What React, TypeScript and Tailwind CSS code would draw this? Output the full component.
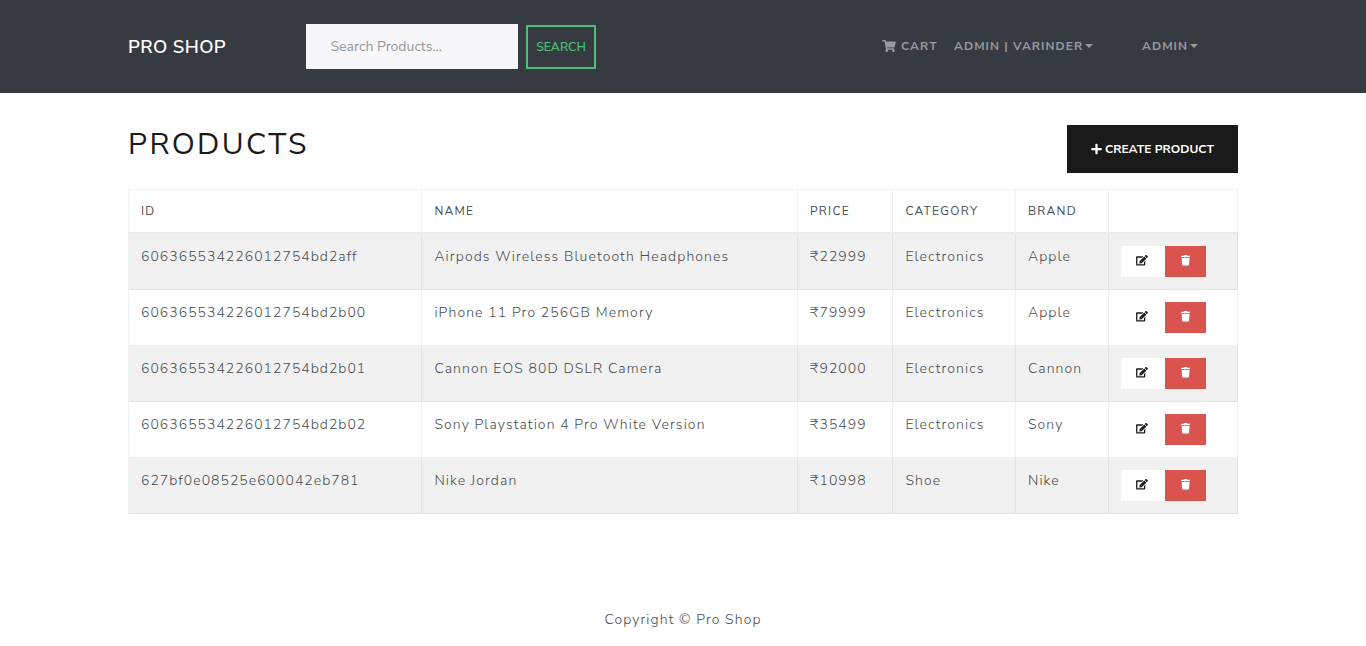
import React from "react";
import { FaEdit, FaPlus, FaShoppingCart, FaTrash } from "react-icons/fa";

const products = [
  { id: "606365534226012754bd2aff", name: "Airpods Wireless Bluetooth Headphones", price: 22999, category: "Electronics", brand: "Apple" },
  { id: "606365534226012754bd2b00", name: "iPhone 11 Pro 256GB Memory", price: 79999, category: "Electronics", brand: "Apple" },
  { id: "606365534226012754bd2b01", name: "Cannon EOS 80D DSLR Camera", price: 92000, category: "Electronics", brand: "Cannon" },
  { id: "606365534226012754bd2b02", name: "Sony Playstation 4 Pro White Version", price: 35499, category: "Electronics", brand: "Sony" },
  { id: "627bf0e08525e600042eb781", name: "Nike Jordan", price: 10998, category: "Shoe", brand: "Nike" },
];

const headings = ["ID", "NAME", "PRICE", "CATEGORY", "BRAND", ""];

function Caret() {
  return <span className="ml-[2px] inline-block border-x-4 border-t-4 border-x-transparent border-t-[#989b9e]" />;
}

function Header() {
  return (
    <header className="h-[93px] bg-[#363a41]">
      <div className="mx-auto flex h-full w-[1110px] items-center">
        <a className="w-[178px] text-[18.4px] font-semibold tracking-[0.4px] text-white">PRO SHOP</a>
        <form className="flex items-center">
          <input
            className="h-[45px] w-[212px] bg-[#f7f7f9] pr-6 pl-[24.5px] pb-px text-[14px] outline-none placeholder:text-[#919aa1]"
            placeholder="Search Products..."
          />
          <button type="button" className="ml-2 mt-px h-[44px] w-[70px] border-2 border-[#4bbf73] text-[12.25px] font-semibold text-[#4bbf73]">
            SEARCH
          </button>
        </form>
        <nav className="ml-auto flex items-center pr-[39px] pb-[2px] text-[12px] font-bold whitespace-nowrap text-[#989b9e]">
          <a className="flex w-[72px] items-center">
            <FaShoppingCart className="mr-[5px] h-[12px] w-[14px]" />
            <span className="tracking-[1.1px]">CART</span>
          </a>
          <a className="flex w-[188px] items-center">
            <span className="tracking-[1.03px]">ADMIN | VARINDER</span>
            <Caret />
          </a>
          <a className="flex w-[57px] items-center">
            <span className="tracking-[1.03px]">ADMIN</span>
            <Caret />
          </a>
        </nav>
      </div>
    </header>
  );
}

function ProductTable() {
  return (
    <table className="mt-4 w-[1110px] table-fixed border-separate border-spacing-0 border-t border-l border-[#f1f1f1] text-[14px] text-[#494d50] [&_td]:pl-3 [&_td:nth-child(2n)]:pl-[12.4px] [&_th]:pl-3 [&_th:nth-child(2n)]:pl-[12.4px]">
      <colgroup>
        <col className="w-[293px]" />
        <col className="w-[376px]" />
        <col className="w-[95px]" />
        <col className="w-[123px]" />
        <col className="w-[93px]" />
        <col className="w-[129px]" />
      </colgroup>
      <thead>
        <tr className="h-[44px] text-left text-[12px]">
          {headings.map((heading, index) => (
            <th key={index} className="border-r border-b-2 border-r-[#f0f0f0] border-b-[#ebebeb] py-0 font-normal tracking-[1.25px]">
              {heading}
            </th>
          ))}
        </tr>
      </thead>
      <tbody className="font-light tracking-[1.12px] [&_td]:border-r [&_td]:border-b [&_td]:border-black/6 [&_td]:pt-3 [&_td]:pb-0 [&_td]:align-top [&_td]:leading-[21px] [&_td]:whitespace-nowrap">
        {products.map((product) => (
          <tr key={product.id} className="h-[56px] odd:bg-[#f1f1f1]">
            <td className="tracking-[1.03px]">{product.id}</td>
            <td className="tracking-[1.11px]">{product.name}</td>
            <td className="tracking-[1.05px]">₹{product.price}</td>
            <td>{product.category}</td>
            <td className="tracking-[1.1px]">{product.brand}</td>
            <td>
              <div className="-ml-[0.4px] flex h-[31px]">
                <button className="flex w-[44px] items-center justify-center bg-white pr-[1.5px] pb-[2px] text-[#1a1a1a]">
                  <FaEdit className="h-[10.5px] w-[12px]" />
                </button>
                <button className="flex w-[41px] items-center justify-center bg-[#d9534f] pb-[2px] text-white">
                  <FaTrash className="h-[10.5px] w-[9.2px]" />
                </button>
              </div>
            </td>
          </tr>
        ))}
      </tbody>
    </table>
  );
}

export default function App() {
  return (
    <div className="flex h-[646px] flex-col overflow-hidden bg-white font-['Nunito_Sans','Lato','Noto_Sans',sans-serif] text-[#494d50]">
      <Header />
      <main className="mx-auto w-[1110px] flex-1 pt-8">
        <div className="flex h-[48px] items-start justify-between">
          <h1 className="text-[30px] leading-[40px] tracking-[2.4px] text-[#1a1a1a]">PRODUCTS</h1>
          <button className="flex h-[48px] w-[171px] items-center justify-center bg-[#1a1a1a] text-[12px] font-bold whitespace-nowrap text-white">
            <FaPlus className="mr-[3px] h-[12px] w-[11px]" />
            <span className="tracking-[0.05px]">CREATE PRODUCT</span>
          </button>
        </div>
        <ProductTable />
      </main>
      <footer className="h-[37px] text-center text-[14px] leading-[21px] font-light tracking-[1.1px]">Copyright © Pro Shop</footer>
    </div>
  );
}
